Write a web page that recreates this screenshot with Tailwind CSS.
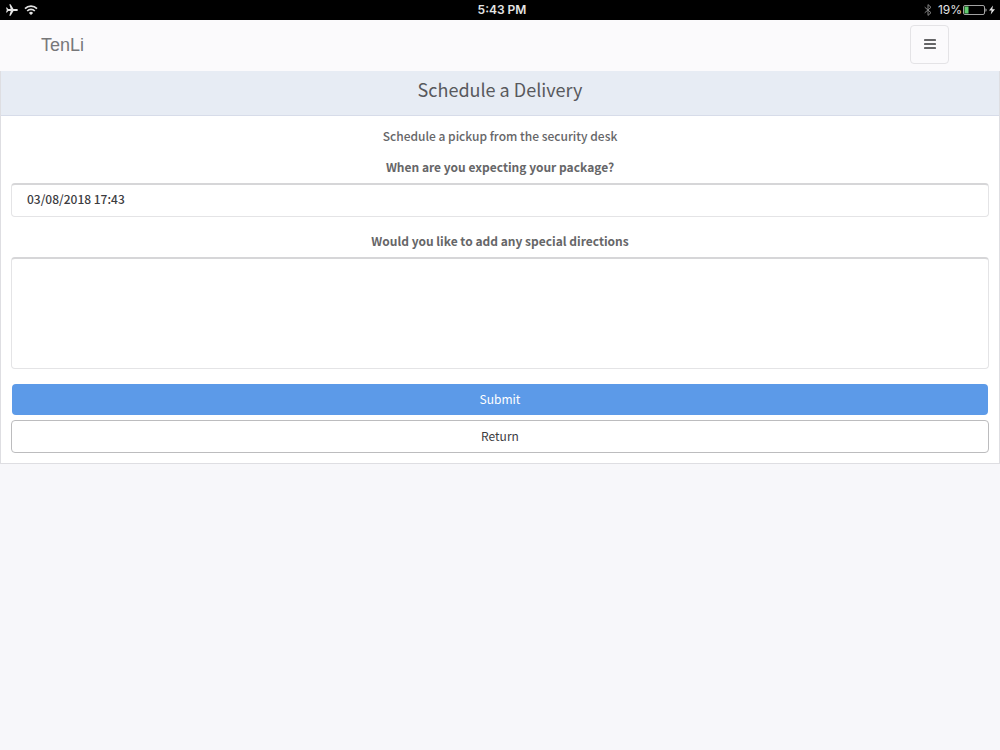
<!DOCTYPE html>
<html lang="en">
<head>
<meta charset="utf-8">
<meta name="viewport" content="width=device-width, initial-scale=1">
<title>TenLi</title>
<script src="https://cdn.jsdelivr.net/npm/@tailwindcss/browser@4"></script>
</head>
<body class="min-h-screen bg-[#f7f7fa] font-['Noto_Sans_CJK_SC',sans-serif] text-xs leading-5 text-[#666668]">
  <div class="grid h-5 grid-cols-[1fr_auto_1fr] items-center bg-black pl-1.5 pr-[5px] font-['Inter',sans-serif] text-xs text-[#e4e4e4]">
    <div class="flex items-center gap-1.5">
      <svg class="h-3 w-3" viewBox="0 0 12 12" fill="currentColor" aria-label="Airplane mode"><path d="M12 6c0-.6-.9-1-2-1H7.500L4.600.2H3.300L4.700 5H2.200L1 3.500H0L.8 6 0 8.500h1L2.200 7h2.500L3.300 11.800h1.300L7.500 7H10c1.100 0 2-.4 2-1z"/></svg>
      <svg class="h-3 w-3.5" viewBox="0 0 14 12" fill="none" stroke="currentColor" stroke-width="1.700" aria-label="Wi-Fi"><path d="M1 4.600a8.500 8.500 0 0 1 12 0M3.200 7a5.400 5.400 0 0 1 7.600 0"/><path d="M7 11 4.900 8.900a3 3 0 0 1 4.200 0z" fill="currentColor" stroke="none"/></svg>
    </div>
    <div class="pl-[3px] font-semibold">5:43 PM</div>
    <div class="flex items-center justify-end">
      <svg class="mr-1.5 h-3 w-2" viewBox="0 0 8 12" fill="none" stroke="#858585" aria-label="Bluetooth"><path d="M.7 3.200 7 8.700 4 11.400V.6L7 3.300.7 8.800"/></svg>
      <span>19%</span>
      <svg class="ml-px h-2.5 w-6" viewBox="0 0 24 10" aria-label="Battery"><rect x=".5" y=".5" width="21" height="9" rx="1.500" fill="none" stroke="#a2a2a2"/><rect x="1.500" y="1.500" width="4" height="7" fill="#62cd70"/><path d="M22.500 3.200c1.400.5 1.400 3.100 0 3.600z" fill="#c8c8c8"/></svg>
      <svg class="ml-0.5 h-2.5 w-1.5" viewBox="0 0 6 10" fill="currentColor" aria-label="Charging"><path d="M4 .5 0 5.600h2.600L1.700 9.500 6 4.200H3.300z"/></svg>
    </div>
  </div>

  <nav class="flex h-[51px] items-center justify-between bg-[#fbfafc] pb-0.5 pl-[41px] pr-[51px]">
    <a href="#" class="font-['Liberation_Sans',sans-serif] text-lg text-[#777779]">TenLi</a>
    <button type="button" aria-label="Menu" class="flex h-[39px] w-[39px] items-center justify-center rounded-sm border border-[#e4e3e6] text-[#656567]">
      <svg class="h-3 w-3" viewBox="0 0 12 12" fill="currentColor"><rect width="12" height="2" rx=".4"/><rect y="4" width="12" height="2" rx=".4"/><rect y="8" width="12" height="2" rx=".4"/></svg>
    </button>
  </nav>

  <main class="border border-t-0 border-[#dedee2] bg-white">
    <h1 class="h-[45px] border-b border-[#d7dce9] bg-[#e7ecf4] pt-0.5 text-center text-lg leading-8 text-[#58595d]">Schedule a Delivery</h1>
    <form class="flex flex-col px-2.5 pb-2.5 pt-2.5 text-center">
      <p class="font-medium">Schedule a pickup from the security desk</p>
      <label for="when" class="mt-[11px] font-bold">When are you expecting your package?</label>
      <input id="when" type="text" value="03/08/2018 17:43" class="mt-1.5 h-[34px] rounded border border-t-2 border-[#e4e4e6] border-t-[#d6d6d8] px-[15px] pb-1 font-medium text-[#3c3c3f]">
      <label for="directions" class="mt-3.5 font-bold">Would you like to add any special directions</label>
      <textarea id="directions" class="mt-1.5 h-28 resize-none rounded border border-t-2 border-[#e4e4e6] border-t-[#d6d6d8] px-[15px] py-1.5"></textarea>
      <button type="submit" class="mx-px mt-[15px] h-[31px] rounded-sm bg-[#5c9ae8] pb-0.5 text-white">Submit</button>
      <button type="button" class="mt-[5px] h-[33px] rounded-sm border border-[#bcbcbe] pb-0.5 text-[#3c3c3f]">Return</button>
    </form>
  </main>
</body>
</html>
